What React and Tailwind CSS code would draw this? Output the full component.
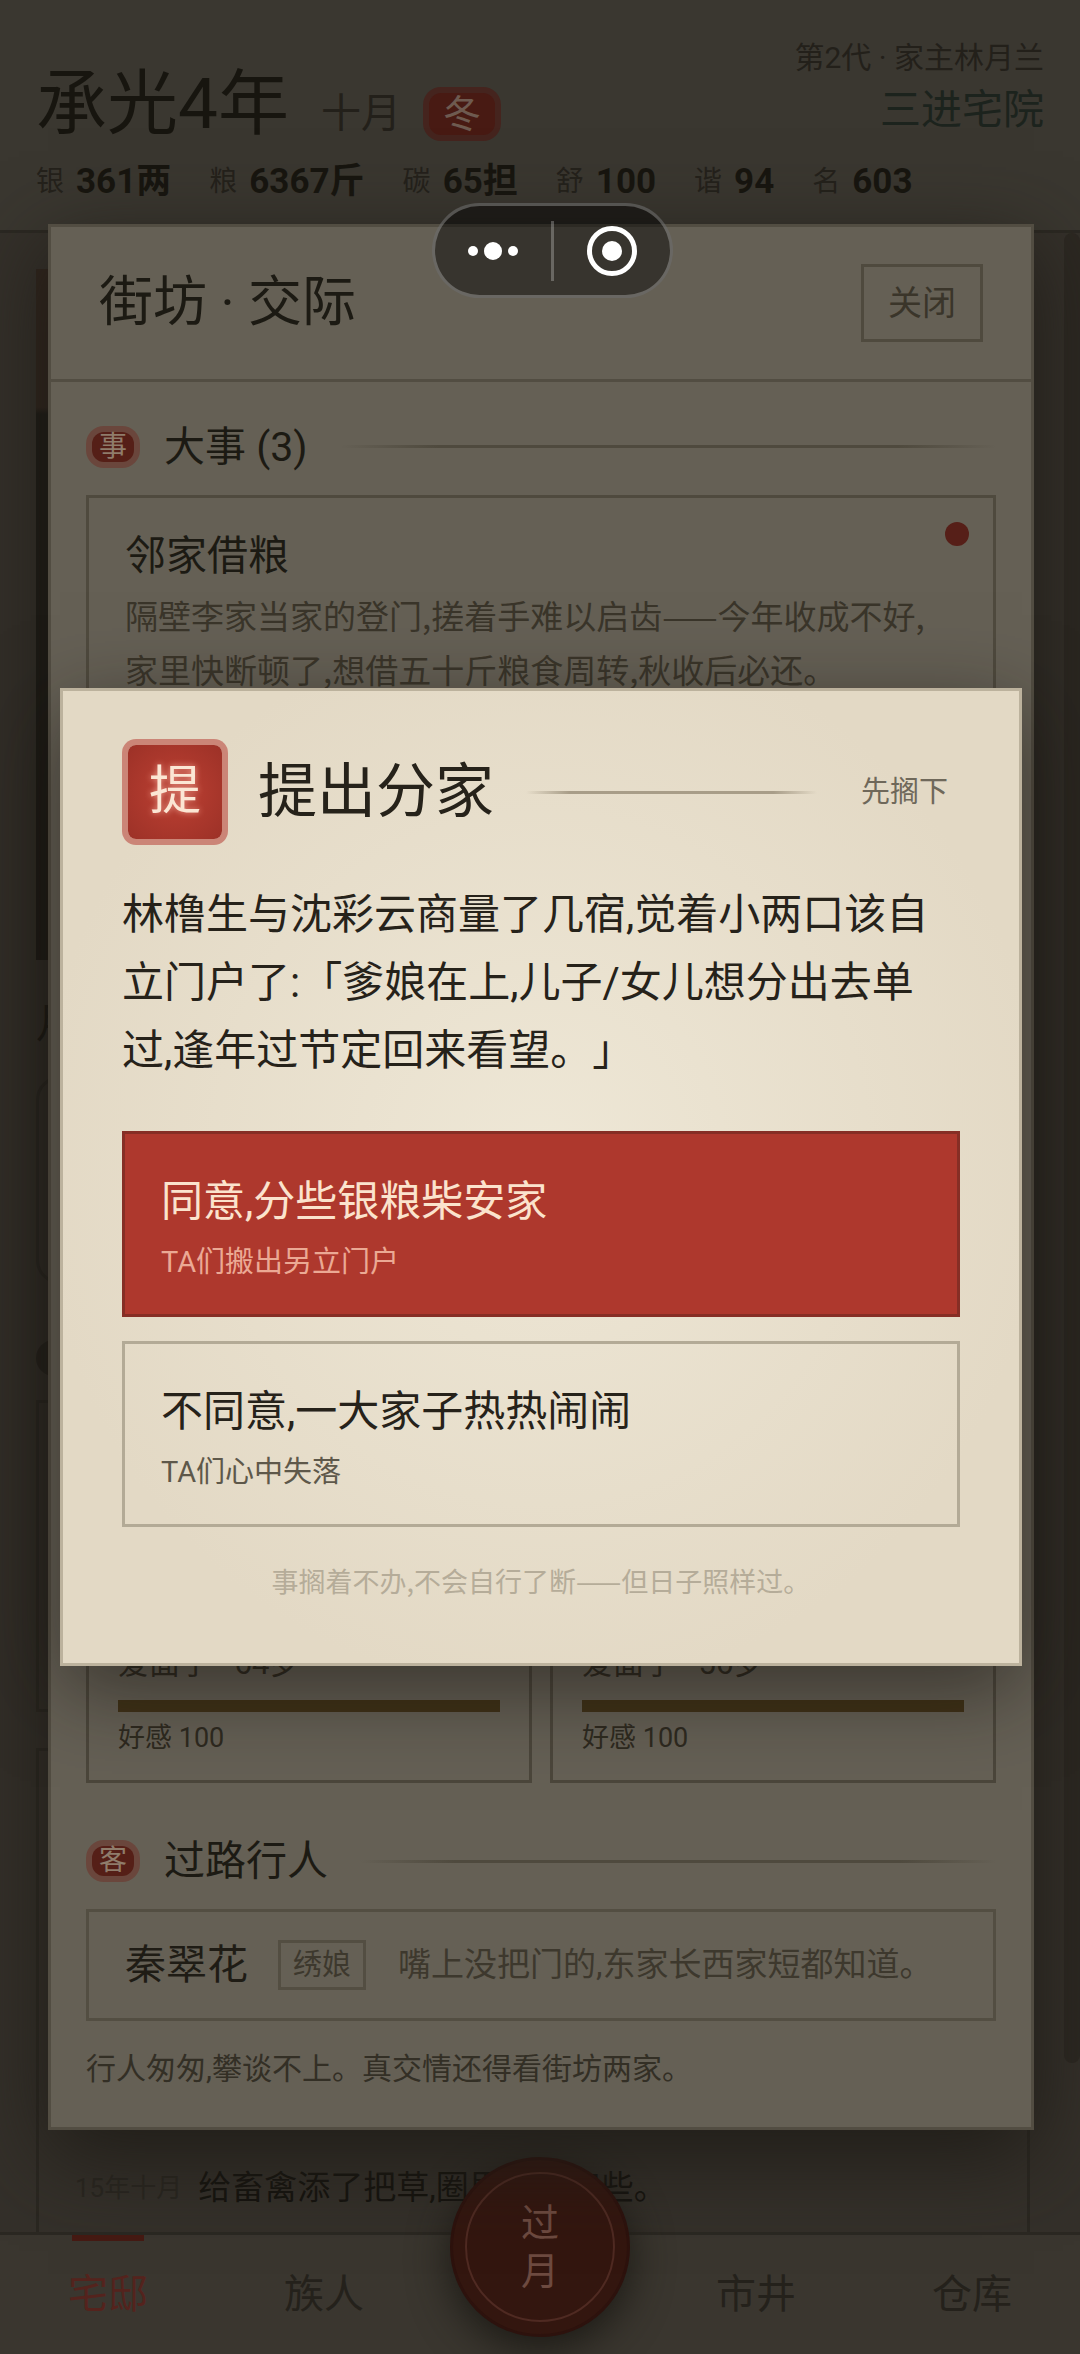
import React, { useState } from "react";

const stats = [
    { label: "银", value: "361两" },
    { label: "粮", value: "6367斤" },
    { label: "碳", value: "65担" },
    { label: "舒", value: "100" },
    { label: "谐", value: "94" },
    { label: "名", value: "603" },
];

const tabs = ["宅邸", "族人", null, "市井", "仓库"];

const neighbours = [
    { id: 1, note: "爱面子 · 64岁", favour: 100 },
    { id: 2, note: "爱面子 · 56岁", favour: 100 },
];

const choices = [
    { title: "同意,分些银粮柴安家", hint: "TA们搬出另立门户", primary: true },
    { title: "不同意,一大家子热热闹闹", hint: "TA们心中失落", primary: false },
];

function TopBar() {
    return (
        <header className="border-b-3 border-[#2b2822] bg-[#3a3730] px-9 pt-9 pb-6 text-[#17150f]">
            <div className="flex items-end justify-between">
                <div className="flex items-center">
                    <h1 className="mt-5 text-[71px] leading-24">承光4年</h1>
                    <span className="mt-10 ml-8 text-[40px] leading-12 text-[#23201a]">十月</span>
                    <span className="mt-10 ml-7 flex h-[42px] w-[66px] items-center justify-center rounded-xl bg-[#481a13] text-[38px] leading-none text-[#6e5a50] ring-6 ring-[#45241e]">
                        冬
                    </span>
                </div>
                <div className="flex flex-col items-end self-start text-[#23201a]">
                    <span className="text-[30px] leading-11">第2代 · 家主林月兰</span>
                    <span className="text-[41px] leading-15 text-[#1c231d]">三进宅院</span>
                </div>
            </div>
            <dl className="mt-1.5 flex gap-[38px]">
                {stats.map((s) => (
                    <div key={s.label} className="flex items-center gap-3">
                        <dt className="text-[28px] leading-12 text-[#24211b]">{s.label}</dt>
                        <dd className="text-[35px] leading-12 font-bold">{s.value}</dd>
                    </div>
                ))}
            </dl>
        </header>
    );
}

function Backdrop() {
    return (
        <main className="relative flex flex-1 flex-col bg-[#34302a] pt-9 pr-[50px] pl-9">
            <div className="h-[691px] bg-linear-to-b from-[#2f241c] from-20% to-[#1a1813] to-21%"></div>
            <h2 className="mt-8 text-[42px] leading-16 text-[#17150f]">月钱</h2>
            <div className="mt-5 h-[208px] rounded-3xl border-3 border-[#2a2721]"></div>
            <span className="mt-14 size-9 rounded-full bg-[#24211b]"></span>
            <div className="mt-6 h-[312px] border-3 border-[#2a2721]"></div>
            <div className="mt-9 flex flex-1 flex-col justify-end border-x-3 border-t-3 border-[#2a2721] px-9 pb-[18px]">
                <p className="flex items-center gap-4 text-[33px] leading-13 text-[#15130e]">
                    <span className="text-[26px] text-[#292620]">15年十月</span>
                    给畜禽添了把草,圈里也暖和些。
                </p>
            </div>
            <div className="absolute top-0 right-0 h-[1830px] w-4 rounded-full bg-[#2c2822]"></div>
        </main>
    );
}

function TabBar() {
    return (
        <nav className="relative grid h-[122px] grid-cols-5 border-t-3 border-[#2b2822] bg-[#3a362f]">
            {tabs.map((name, i) =>
                name ? (
                    <button
                        key={name}
                        type="button"
                        className={
                            i === 0
                                ? "flex flex-col items-center text-[40px] leading-14 text-[#54231d]"
                                : "flex flex-col items-center text-[40px] leading-14 text-[#24211b]"
                        }
                    >
                        <span className={i === 0 ? "h-1.5 w-18 bg-[#461a13]" : "h-1.5 w-18"}></span>
                        <span className="mt-[26px]">{name}</span>
                    </button>
                ) : (
                    <span key="gap"></span>
                )
            )}
            <button
                type="button"
                className="absolute -top-[78px] left-1/2 flex size-45 -translate-x-1/2 items-center justify-center rounded-full border-3 border-[#2d120d] bg-[#33160f] p-3 shadow-[0_12px_40px_#1c1a15]"
            >
                <span className="flex size-full flex-col items-center justify-center rounded-full border-2 border-[#4f2a22] text-[38px] leading-12 text-[#6d4a40]">
                    <span>过</span>
                    <span>月</span>
                </span>
            </button>
        </nav>
    );
}

function SectionTitle({ seal, children }) {
    return (
        <div className="flex items-center">
            <span className="mx-1.5 flex h-[30px] w-[42px] items-center justify-center rounded-xl bg-[#551f17] text-[28px] leading-none text-[#8f7c6b] ring-6 ring-[#6a463c]">
                {seal}
            </span>
            <h3 className="ml-6 text-[41px] leading-14 text-[#1c1a13]">{children}</h3>
            <span className="ml-8 h-[3px] flex-1 bg-[linear-gradient(90deg,transparent,#4f4a3e_15%,#4f4a3e_85%,transparent)]"></span>
        </div>
    );
}

function StreetPanel() {
    return (
        <section className="flex h-[81vh] w-full flex-col border-3 border-[#524d42] bg-[#656055] shadow-[0_24px_80px_#1f1c17]">
            <div className="flex items-center justify-between border-b-3 border-[#524d42] px-12 py-9">
                <h2 className="text-[54px] leading-20 text-[#1c1a13]">街坊 · 交际</h2>
                <button type="button" className="border-3 border-[#4f4a3e] px-6 text-[34px] leading-18 text-[#3a352a]">
                    关闭
                </button>
            </div>

            <div className="flex flex-1 flex-col px-[35px] pt-[37px] pb-[34px]">
                <SectionTitle seal="事">大事 (3)</SectionTitle>
                <article className="relative mt-5 flex-1 border-3 border-[#4f4a3e] px-9 pt-[26px]">
                    <h4 className="text-[41px] leading-16 text-[#1c1a13]">邻家借粮</h4>
                    <p className="pr-3 font-['Noto_Sans_CJK_SC',sans-serif] text-[33px] leading-[54px] text-[#3a352a]">
                        隔壁李家当家的登门,搓着手难以启齿——今年收成不好,家里快断顿了,想借五十斤粮食周转,秋收后必还。
                    </p>
                    <span className="absolute top-6 right-6 size-6 rounded-full bg-[#561f18]"></span>
                </article>

                <div className="mt-6 grid grid-cols-2 gap-[18px]">
                    {neighbours.map((n) => (
                        <article key={n.id} className="border-3 border-[#4b463b] px-[29px] pt-7 pb-5">
                            <p className="text-[31px] leading-12 text-[#2e2a20]">{n.note}</p>
                            <div className="mt-3 h-3 bg-[#524d42]">
                                <div className="h-full bg-[#403217]" style={{ width: `${n.favour}%` }}></div>
                            </div>
                            <p className="mt-1 text-[27px] leading-11 text-[#2e2a20]">好感 {n.favour}</p>
                        </article>
                    ))}
                </div>

                <div className="mt-[50px]">
                    <SectionTitle seal="客">过路行人</SectionTitle>
                </div>
                <article className="mt-5 flex items-center border-3 border-[#534e42] px-9 py-7">
                    <h4 className="text-[41px] leading-12 text-[#1f1c15]">秦翠花</h4>
                    <span className="ml-[30px] border-3 border-[#534e42] px-3 text-[29px] leading-11 text-[#3d382d]">绣娘</span>
                    <p className="ml-8 text-[33px] leading-12 text-[#3d382d]">嘴上没把门的,东家长西家短都知道。</p>
                </article>
                <p className="mt-6 text-[30px] leading-12 text-[#332f25]">行人匆匆,攀谈不上。真交情还得看街坊两家。</p>
            </div>
        </section>
    );
}

function EventDialog() {
    const [picked, setPicked] = useState(null);

    return (
        <section
            role="dialog"
            aria-labelledby="event-title"
            className="w-full border-3 border-[#bcb29d] bg-radial-[ellipse_at_50%_48%] from-[#eee7d6] to-[#e3d9c5] to-75% px-[59px] pt-12 pb-[58px] shadow-[0_24px_80px_rgba(20,17,12,0.55)]"
        >
            <div className="flex items-center">
                <span className="m-1.5 flex size-[94px] items-center justify-center rounded-lg bg-radial from-[#b03a2e] from-40% to-[#9c3127] text-[52px] leading-none text-[#fbe6d4] ring-6 ring-[#cb8577] text-shadow-[0_0_6px_#f0a090]">
                    提
                </span>
                <h2 id="event-title" className="ml-[30px] text-[59px] leading-20 text-[#26221a]">
                    提出分家
                </h2>
                <span className="mx-8 h-[3px] flex-1 bg-[linear-gradient(90deg,transparent,#a89d88_15%,#a89d88_85%,transparent)]"></span>
                <button type="button" className="px-3 text-[29px] leading-12 text-[#6f685a]">
                    先搁下
                </button>
            </div>

            <p className="mt-9 pr-5 text-[42px] leading-17 text-[#26221a]">
                林橹生与沈彩云商量了几宿,觉着小两口该自立门户了:「爹娘在上,儿子/女儿想分出去单过,逢年过节定回来看望。」
            </p>

            <div className="mt-[46px] flex flex-col gap-6">
                {choices.map((c) => (
                    <button
                        key={c.title}
                        type="button"
                        aria-pressed={picked === c.title}
                        onClick={() => setPicked(c.title)}
                        className={
                            c.primary
                                ? "border-3 border-[#862e25] bg-[#ae382d] px-9 pt-9 pb-7 text-left text-[#fbe3cd]"
                                : "border-3 border-[#b3aa96] px-9 pt-9 pb-7 text-left text-[#26221a]"
                        }
                    >
                        <span className="block text-[42px] leading-16">{c.title}</span>
                        <span
                            className={
                                c.primary
                                    ? "mt-1 block text-[29px] leading-12 text-[#eba994]"
                                    : "mt-1 block text-[29px] leading-12 text-[#5e584a]"
                            }
                        >
                            {c.hint}
                        </span>
                    </button>
                ))}
            </div>

            <p className="mt-[30px] text-center font-['Noto_Sans_CJK_SC',sans-serif] text-[27px] leading-12 text-[#b5ac99]">
                事搁着不办,不会自行了断——但日子照样过。
            </p>
        </section>
    );
}

function Capsule() {
    return (
        <div className="absolute top-[203px] left-1/2 flex h-[95px] w-[241px] -translate-x-[108px] items-center rounded-full border-3 border-white/25 bg-black/45">
            <button type="button" aria-label="更多" className="flex flex-1 items-center justify-center gap-1.5">
                <span className="size-2.5 rounded-full bg-white"></span>
                <span className="size-4.5 rounded-full bg-white"></span>
                <span className="size-2.5 rounded-full bg-white"></span>
            </button>
            <span className="h-15 w-[3px] bg-white/25"></span>
            <button type="button" aria-label="退出" className="flex flex-1 items-center justify-center">
                <span className="flex size-[50px] items-center justify-center rounded-full border-5 border-white">
                    <span className="size-5 rounded-full bg-white"></span>
                </span>
            </button>
        </div>
    );
}

export default function App() {
    return (
        <div className="relative flex min-h-screen flex-col overflow-hidden bg-[#34302a] font-[Roboto,'Noto_Sans_CJK_SC',sans-serif] [text-spacing-trim:space-all]">
            <TopBar />
            <Backdrop />
            <TabBar />
            <div className="absolute inset-0 flex items-center pr-[46px] pl-12">
                <StreetPanel />
            </div>
            <div className="absolute inset-0 flex items-center pr-[58px] pl-15">
                <EventDialog />
            </div>
            <Capsule />
        </div>
    );
}
